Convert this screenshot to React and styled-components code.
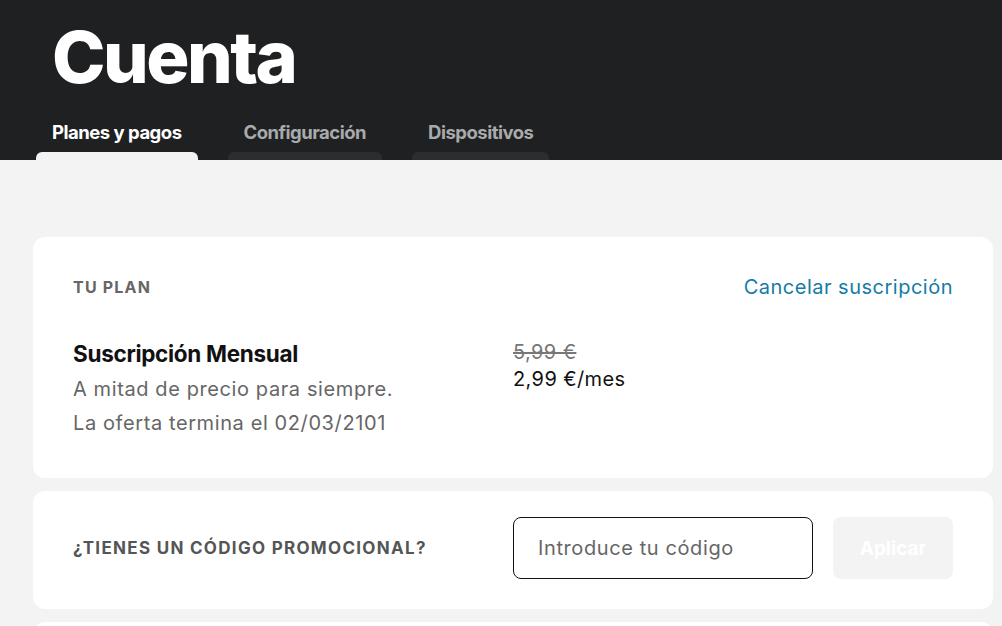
import styled, { createGlobalStyle } from "styled-components"

const Global = createGlobalStyle`
    body {
        margin: 0;
        background: #f3f3f3;
        font-family: Inter, "Noto Sans", sans-serif;
    }
`

const tabs = ["Planes y pagos", "Configuración", "Dispositivos"]

const App = () => {
    return (
        <>
            <Global />
            <Header>
                <Title>Cuenta</Title>
                <Tabs>
                    {tabs.map((t, i) => (
                        <Tab key={t}>
                            <TabLabel active={i === 0}>{t}</TabLabel>
                            <TabPill active={i === 0} />
                        </Tab>
                    ))}
                </Tabs>
            </Header>
            <Main>
                <Card>
                    <CardTop>
                        <Label>Tu plan</Label>
                        <LinkText>Cancelar suscripción</LinkText>
                    </CardTop>
                    <PlanRow>
                        <PlanInfo>
                            <PlanName>Suscripción Mensual</PlanName>
                            <Muted>A mitad de precio para siempre.</Muted>
                            <Muted>La oferta termina el 02/03/2101</Muted>
                        </PlanInfo>
                        <Price>
                            <OldPrice>5,99 €</OldPrice>
                            <NewPrice>2,99 €/mes</NewPrice>
                        </Price>
                    </PlanRow>
                </Card>
                <PromoCard>
                    <PromoLabel>¿Tienes un código promocional?</PromoLabel>
                    <Input placeholder="Introduce tu código" />
                    <ApplyButton>Aplicar</ApplyButton>
                </PromoCard>
                <Card />
            </Main>
        </>
    )
}

const Header = styled.div`
    background-color: #1f2022;
    height: 160px;
    padding: 0 36px;
    display: flex;
    flex-direction: column;
    box-sizing: border-box;
`

const Title = styled.h1`
    margin: 14px 0 0 16px;
    color: #fff;
    font-size: 72px;
    font-weight: 800;
    letter-spacing: -2.5px;
    line-height: 86px;
`

const Tabs = styled.div`
    display: flex;
    gap: 30px;
    margin-top: auto;
`

const Tab = styled.div`
    display: flex;
    flex-direction: column;
`

const TabLabel = styled.span`
    padding: 0 16px;
    font-size: 18.5px;
    font-weight: 700;
    letter-spacing: -0.5px;
    color: ${(p) => (p.active ? "#fff" : "#a9aaac")};
    line-height: 24px;
    margin-bottom: 8px;
    white-space: nowrap;
`

const TabPill = styled.div`
    height: 8px;
    border-radius: 6px 6px 0 0;
    background: ${(p) => (p.active ? "#f3f3f3" : "#2c2d30")};
`

const Main = styled.div`
    padding: 77px 9px 0 33px;
    display: flex;
    flex-direction: column;
    gap: 13px;
`

const Card = styled.div`
    background: #fff;
    border-radius: 12px;
    padding: 38px 40px;
    min-height: 40px;
`

const CardTop = styled.div`
    display: flex;
    justify-content: space-between;
    align-items: center;
    line-height: 24px;
`

const Label = styled.span`
    font-size: 16px;
    font-weight: 700;
    letter-spacing: 1.2px;
    text-transform: uppercase;
    color: #666;
`

const LinkText = styled.a`
    font-size: 20px;
    letter-spacing: 0.5px;
    color: #157ca6;
    cursor: pointer;
`

const PlanRow = styled.div`
    display: grid;
    grid-template-columns: 440px 1fr;
    margin-top: 37px;
`

const PlanInfo = styled.div`
    display: flex;
    flex-direction: column;
`

const PlanName = styled.span`
    font-size: 22.5px;
    font-weight: 700;
    letter-spacing: -0.3px;
    color: #111;
    line-height: 36px;
`

const Muted = styled.span`
    font-size: 20px;
    letter-spacing: 0.6px;
    color: #666;
    line-height: 34px;
`

const Price = styled.div`
    display: flex;
    flex-direction: column;
    margin-top: 3px;
    font-size: 20px;
    letter-spacing: 0.4px;
    line-height: 27px;
`

const OldPrice = styled.span`
    color: #777;
    text-decoration: line-through;
`

const NewPrice = styled.span`
    color: #111;
`

const PromoCard = styled(Card)`
    display: flex;
    align-items: center;
    padding: 26px 40px 30px;
`

const PromoLabel = styled(Label)`
    width: 440px;
    font-size: 17px;
    letter-spacing: 1.3px;
    color: #555;
`

const Input = styled.input`
    width: 300px;
    height: 62px;
    box-sizing: border-box;
    border: 1px solid #111;
    border-radius: 8px;
    padding: 0 24px;
    font-family: inherit;
    font-size: 20px;
    letter-spacing: 0.6px;
    outline: none;
    &::placeholder {
        color: #666;
    }
`

const ApplyButton = styled.button`
    margin-left: 20px;
    width: 120px;
    height: 62px;
    border: none;
    border-radius: 8px;
    background: #f3f3f3;
    color: #fff;
    font-family: inherit;
    font-size: 19px;
    font-weight: 700;
`

export default App
